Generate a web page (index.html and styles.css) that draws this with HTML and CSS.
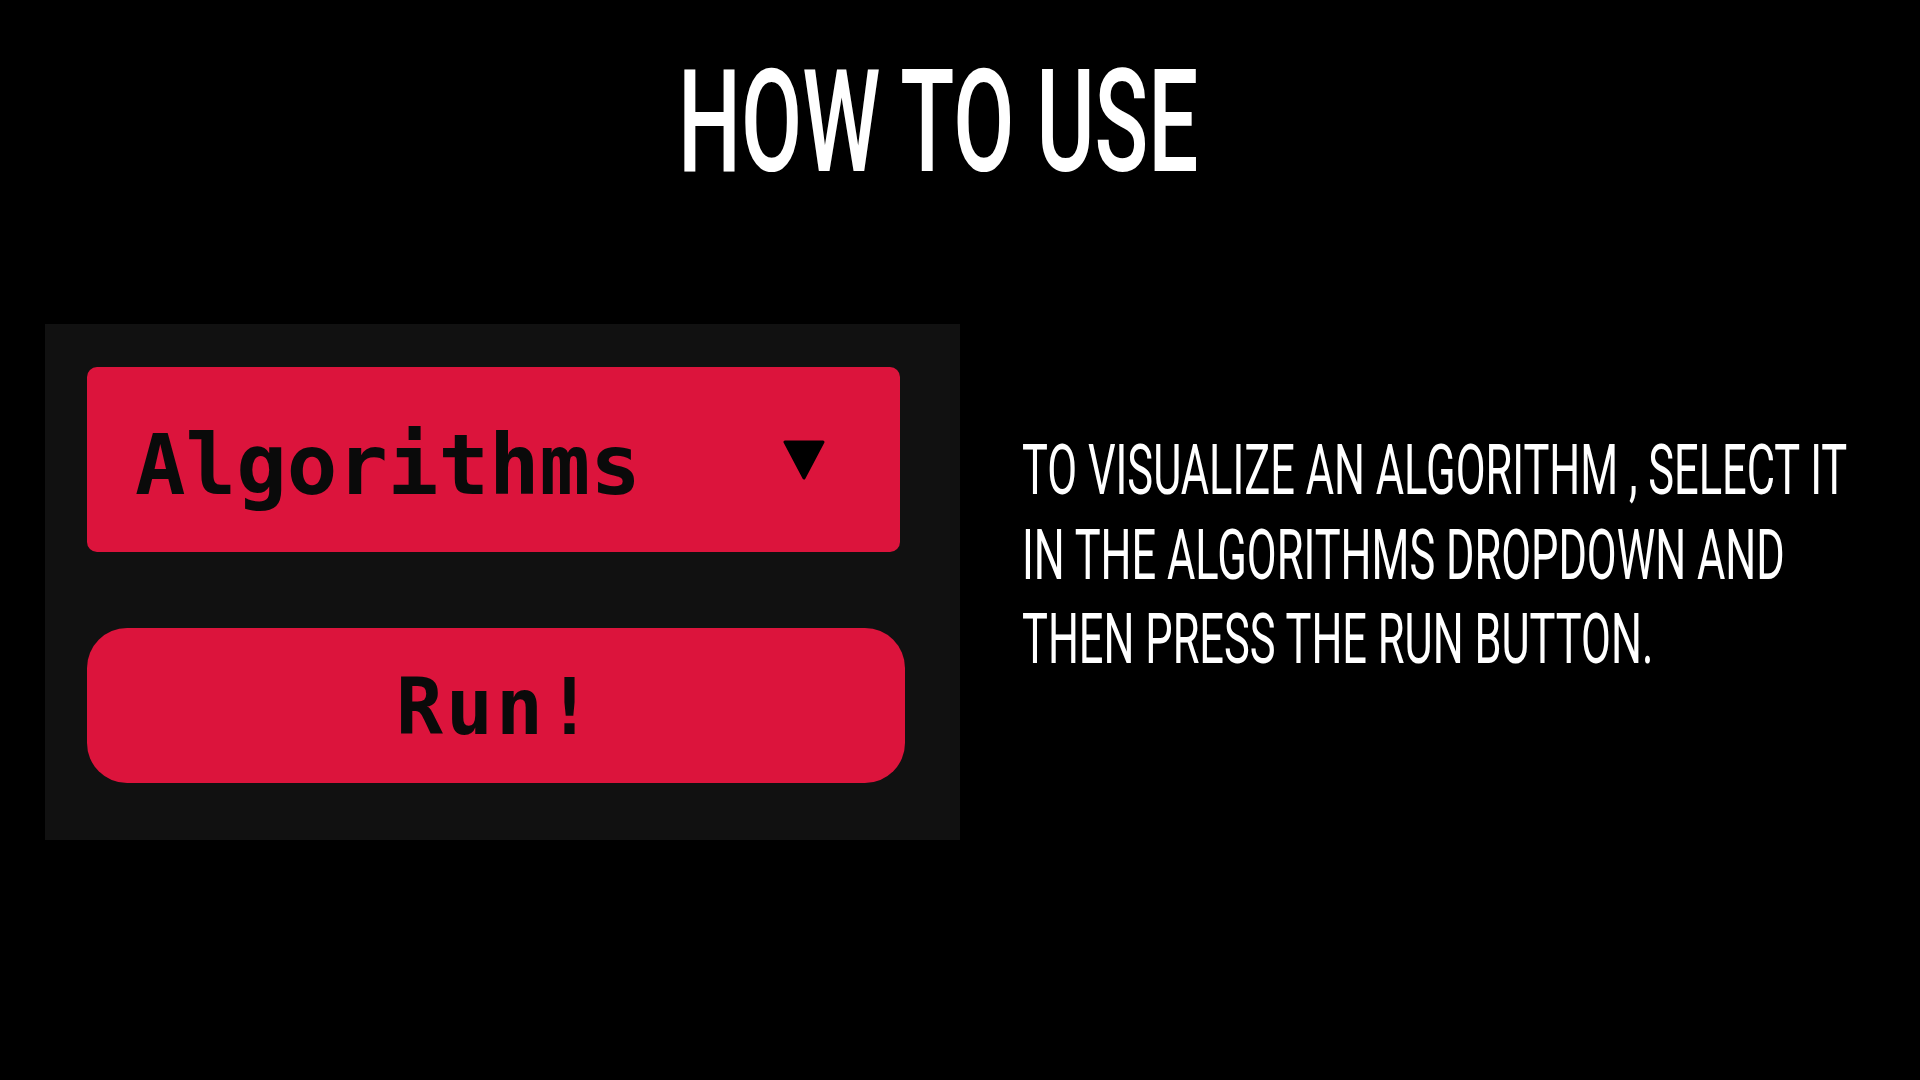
FILE: index.html
```html
<!DOCTYPE html>
<html lang="en">
<head>
<meta charset="utf-8">
<title>How to use</title>
<link rel="stylesheet" href="styles.css">
</head>
<body>
<div class="page">
  <h1 class="title"><span class="title-text">HOW TO USE</span></h1>
  <div class="row">
    <div class="panel">
      <div class="dropdown">
        <span class="dd-label">Algorithms</span>
        <svg class="dd-arrow" width="42" height="40" viewBox="0 0 42 40" aria-hidden="true">
          <polygon points="2,2 40,2 21,38" fill="#000" stroke="#000" stroke-width="3" stroke-linejoin="round"/>
        </svg>
      </div>
      <div class="run"><span class="run-label">Run!</span></div>
    </div>
    <p class="desc">TO VISUALIZE AN ALGORITHM , SELECT IT<br>IN THE ALGORITHMS DROPDOWN AND<br>THEN PRESS THE RUN BUTTON.</p>
  </div>
</div>
</body>
</html>
```
FILE: styles.css
```css
html, body {
  margin: 0;
  padding: 0;
  background: #000;
}
body {
  width: 1920px;
  height: 1080px;
  overflow: hidden;
  font-family: Roboto, "Liberation Sans", sans-serif;
  color: #fff;
}
.page {
  padding-top: 52px;
}
.title {
  margin: 0;
  padding-right: 44px;
  text-align: center;
  font-family: Roboto, "Liberation Sans", sans-serif;
  font-weight: 500;
  font-size: 142px;
  line-height: 142px;
  height: 142px;
  color: #fff;
}
.title-text {
  display: inline-block;
  transform: scaleX(0.625);
  transform-origin: center top;
  white-space: nowrap;
}
.row {
  display: flex;
  align-items: flex-start;
  margin-top: 130px;
  padding-left: 45px;
}
.panel {
  box-sizing: border-box;
  width: 915px;
  height: 516px;
  flex: none;
  background: #111;
  padding: 43px 0 0 42px;
}
.dropdown {
  box-sizing: border-box;
  width: 813px;
  height: 185px;
  background: #dc143c;
  border-radius: 10px;
  display: flex;
  align-items: center;
  padding-left: 48px;
  padding-right: 75px;
}
.dd-label {
  font-family: "DejaVu Sans Mono", "Liberation Mono", monospace;
  font-weight: 700;
  font-size: 84px;
  color: #0a0a0a;
  padding-top: 10px;
}
.dd-arrow {
  margin-left: auto;
  display: block;
}
.run {
  box-sizing: border-box;
  width: 818px;
  height: 155px;
  margin-top: 76px;
  background: #dc143c;
  border-radius: 40px;
  display: flex;
  align-items: center;
  justify-content: center;
}
.run-label {
  font-family: "DejaVu Sans Mono", "Liberation Mono", monospace;
  font-weight: 700;
  font-size: 78px;
  letter-spacing: 3px;
  color: #0a0a0a;
  padding-top: 3px;
}
.desc {
  margin: 104px 0 0 62px;
  font-family: Roboto, "Liberation Sans", sans-serif;
  font-weight: 400;
  font-size: 70px;
  line-height: 84.5px;
  white-space: nowrap;
  transform: scaleX(0.62);
  transform-origin: left top;
  color: #fff;
}
```
